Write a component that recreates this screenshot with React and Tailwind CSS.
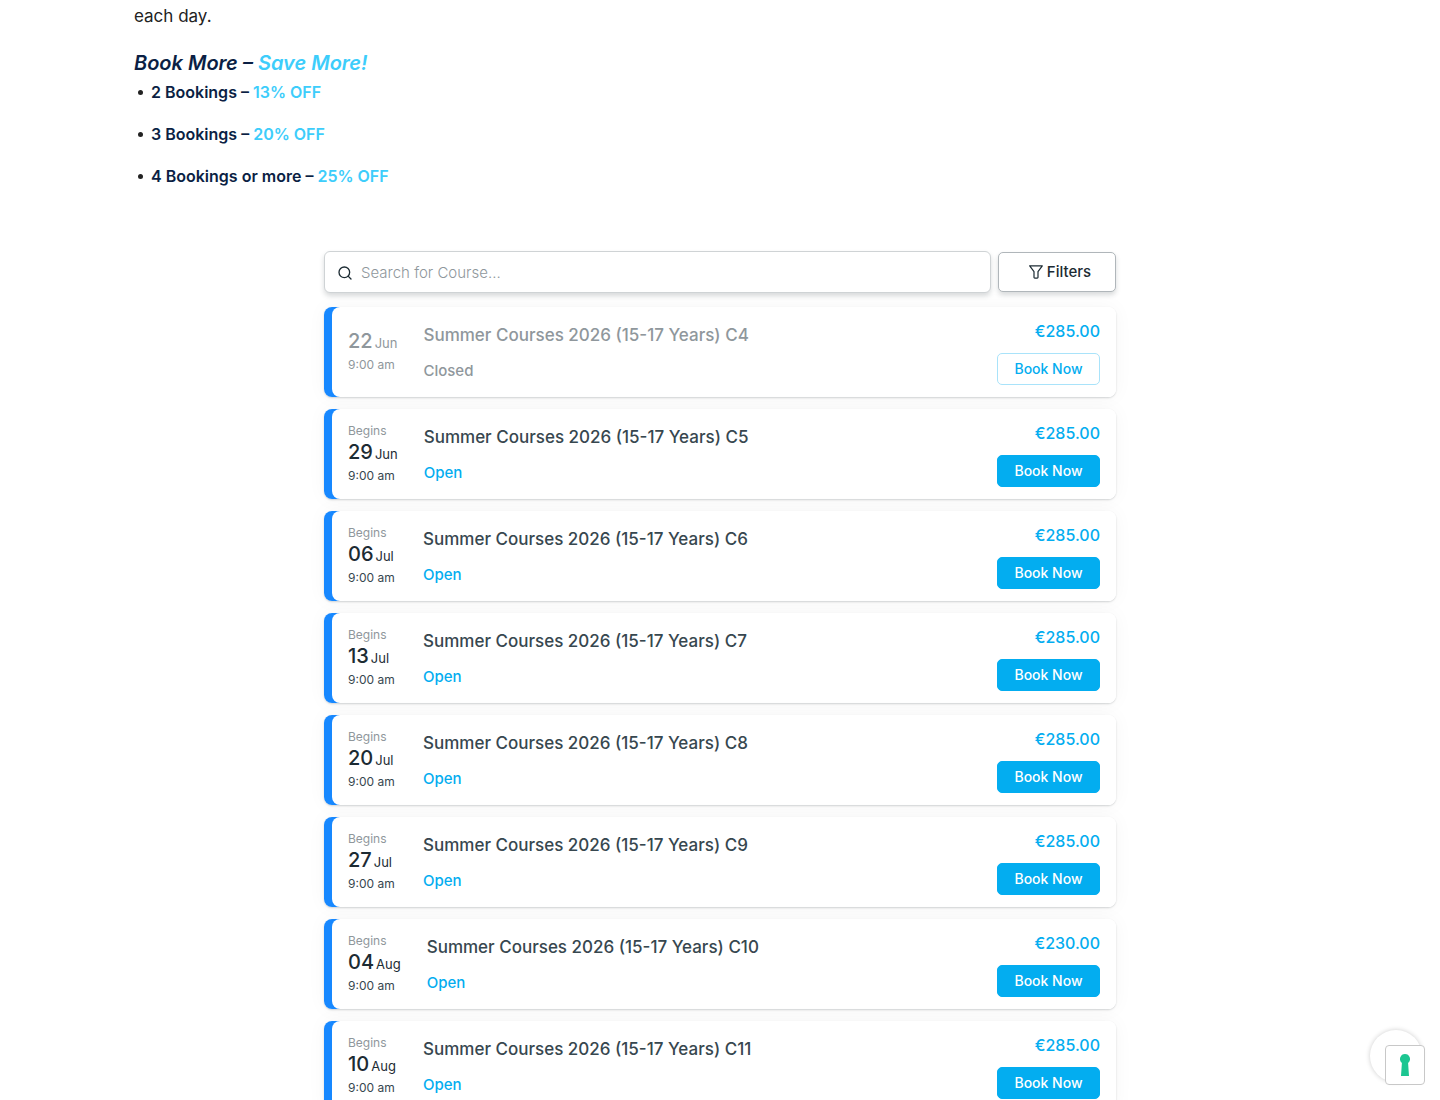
import { Search } from 'lucide-react'

const offers = [
  { label: '2 Bookings –', discount: '13% OFF' },
  { label: '3 Bookings –', discount: '20% OFF' },
  { label: '4 Bookings or more –', discount: '25% OFF' },
]

const courses = [
  { code: 'C4', day: '22', month: 'Jun', price: '€285.00', closed: true },
  { code: 'C5', day: '29', month: 'Jun', price: '€285.00' },
  { code: 'C6', day: '06', month: 'Jul', price: '€285.00' },
  { code: 'C7', day: '13', month: 'Jul', price: '€285.00' },
  { code: 'C8', day: '20', month: 'Jul', price: '€285.00' },
  { code: 'C9', day: '27', month: 'Jul', price: '€285.00' },
  { code: 'C10', day: '04', month: 'Aug', price: '€230.00' },
  { code: 'C11', day: '10', month: 'Aug', price: '€285.00' },
]

const FunnelIcon = () => (
  <svg width="14" height="14" viewBox="0 0 14 14" fill="none" stroke="currentColor" strokeWidth="1.2" strokeLinejoin="round">
    <path d="M.7.8h12.6L9 6.7v5.6a.8.8 0 0 1-.8.8H5.8a.8.8 0 0 1-.8-.8V6.7z" />
  </svg>
)

const CourseCard = ({ course }) => {
  const { code, day, month, price, closed } = course

  return (
    <li className="rounded-lg bg-[linear-gradient(90deg,#1788ff_16px,#fff_16px)] pl-2 shadow-[0_1px_2px_rgba(38,50,56,0.2),0_0_20px_rgba(0,0,0,0.04)]">
      <div className="flex h-[90px] items-center rounded-lg bg-white px-4">
        <div className={`min-w-[49px] ${closed ? 'text-[#8f979c]' : 'text-[#37474f]'}`}>
          {!closed && <p className="text-xs leading-[18px] text-[#8f979c]">Begins</p>}
          <p className={`leading-6 whitespace-nowrap ${closed ? '' : 'text-[#1c2b33]'}`}>
            <span className="text-xl leading-6 font-medium">{day}</span>
            <span className="ml-0.5 text-[13px]">{month}</span>
          </p>
          <p className="text-xs leading-5 whitespace-nowrap">9:00 am</p>
        </div>

        <div className="ml-[26px] flex-1 pt-0.5 font-medium">
          <h3 className={`text-[17px] leading-6 ${closed ? 'text-[#8f979c]' : 'text-[#37474f]'}`}>
            Summer Courses 2026 (15-17 Years) {code}
          </h3>
          <p className={`mt-3 text-[15px] leading-6 ${closed ? 'text-[#8f979c]' : 'text-[#03adf0]'}`}>
            {closed ? 'Closed' : 'Open'}
          </p>
        </div>

        <div className="flex flex-col items-end gap-2.5 font-medium">
          <span className="text-base leading-6 text-[#03adf0]">{price}</span>
          <button
            type="button"
            className={`h-8 w-[103px] rounded-[5px] border text-sm ${
              closed ? 'border-[#a9e3fa] bg-white text-[#03adf0]' : 'border-[#03adf0] bg-[#03adf0] text-white'
            }`}
          >
            Book Now
          </button>
        </div>
      </div>
    </li>
  )
}

const App = () => (
  <div className="h-screen overflow-hidden bg-white font-['Inter',sans-serif]">
    <main className="mx-auto max-w-[1172px] pt-[3px]">
      <p className="text-[17px] leading-[26px] text-[#222]">each day.</p>

      <h2 className="mt-[22px] text-xl leading-6 font-semibold text-[#0b1f44] italic">
        Book More – <span className="text-[#3dcdfb]">Save More!</span>
      </h2>
      <ul className="mt-1 space-y-4">
        {offers.map((offer) => (
          <li key={offer.discount} className="flex items-center text-base leading-[26px] font-semibold text-[#0b1f44]">
            <span className="mr-2 ml-1 h-[5px] w-[5px] rounded-full bg-[#222]" />
            <span>
              {offer.label} <span className="text-[#3dcdfb]">{offer.discount}</span>
            </span>
          </li>
        ))}
      </ul>

      {/* Course search */}
      <section className="mx-auto mt-[62px] max-w-[792px]">
        <div className="flex items-center gap-[7px]">
          <label className="flex h-[42px] flex-1 items-center rounded-md border border-[#cfd3d5] bg-white px-3 pt-0.5 shadow-[0_3px_5px_rgba(38,50,56,0.18)]">
            <Search size={16} strokeWidth={2} className="text-[#1c2b33]" />
            <input
              type="text"
              aria-label="Search for Course"
              placeholder="Search for Course..."
              className="ml-2 flex-1 text-[15px] font-light outline-none placeholder:text-[#8f979c]"
            />
          </label>
          <button
            type="button"
            className="flex h-10 w-[118px] items-center justify-center gap-1 rounded-[5px] border border-[#b0b6ba] bg-white pl-1.5 text-[15px] font-medium text-[#1c2b33] shadow-[0_3px_5px_rgba(38,50,56,0.18)]"
          >
            <FunnelIcon />
            Filters
          </button>
        </div>

        <ul className="mt-3.5 space-y-3">
          {courses.map((course) => (
            <CourseCard key={course.code} course={course} />
          ))}
        </ul>
      </section>
    </main>

    {/* Floating widgets */}
    <div className="fixed right-[18px] bottom-[18px] h-[52px] w-[52px] rounded-full bg-white shadow-[0_0_5px_rgba(0,0,0,0.2)]" />
    <button
      type="button"
      aria-label="Privacy preferences"
      className="fixed right-[15px] bottom-[15px] flex h-10 w-10 items-center justify-center rounded-[4px] border border-[#c8c8c8] bg-white"
    >
      <svg width="10" height="22" viewBox="0 0 10 22" fill="#1cc691">
        <path d="M5 0a5 5 0 0 1 3.1 8.9L9 22H1l.9-13.1A5 5 0 0 1 5 0z" />
      </svg>
    </button>
  </div>
)

export default App
